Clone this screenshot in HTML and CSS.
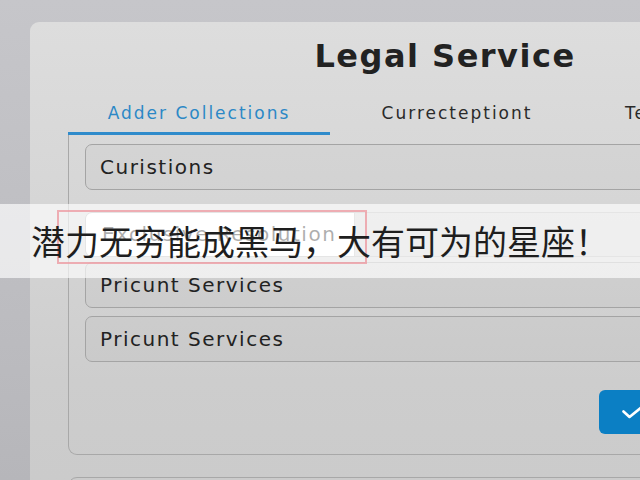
FILE: index.html
```html
<!DOCTYPE html>
<html lang="en">
<head>
<meta charset="utf-8">
<title>Legal Service</title>
<link rel="stylesheet" href="styles.css">
</head>
<body>
<div class="card">
  <h1 class="title">Legal Service</h1>
  <div class="tabs">
    <div class="tab tab-first active">Adder Collections</div>
    <div class="tab tab-second">Currecteptiont</div>
    <div class="tab tab-third">Terms of Service</div>
  </div>
  <div class="panel">
    <div class="field">Curistions</div>
    <div class="field field-focus"><span class="field-inner">Exclusive Resolution</span></div>
    <div class="field field-tight">Pricunt Services</div>
    <div class="field field-close">Pricunt Services</div>
    <div class="actions">
      <button class="confirm" type="button" aria-label="Confirm">
        <svg width="22" height="14" viewBox="0 0 22 14"><polyline points="1.5,6.5 7.5,12 20.5,1.5" fill="none" stroke="#ffffff" stroke-width="2.6" stroke-linecap="round" stroke-linejoin="round"/></svg>
      </button>
    </div>
  </div>
  <div class="next-box"></div>
</div>
<div class="banner">
  <div class="highlight"></div>
  <span class="banner-text">潜力无穷能成黑马，大有可为的星座！</span>
</div>
</body>
</html>
```

FILE: styles.css
```css
html, body {
  margin: 0;
  padding: 0;
  width: 640px;
  height: 480px;
  overflow: hidden;
}
body {
  background: linear-gradient(180deg, #c6c6ca 0%, #bdbdc1 60%, #b6b6ba 100%);
  font-family: "DejaVu Sans", "Liberation Sans", sans-serif;
  color: #222;
  position: relative;
}
.card {
  margin: 22px 0 0 30px;
  width: 830px;
  height: 600px;
  box-sizing: border-box;
  padding: 16px 0 0 38px;
  border-radius: 9px 9px 0 0;
  background: linear-gradient(180deg, #dddddd 0%, #d6d6d6 30%, #cdcdcd 60%, #c8c8c8 100%);
}
.title {
  margin: 0 0 28px -38px;
  font-family: "DejaVu Sans", "Liberation Sans", sans-serif;
  font-weight: bold;
  font-size: 32px;
  line-height: 37px;
  letter-spacing: 1.5px;
  text-align: center;
  color: #222;
}
.tabs {
  display: flex;
  white-space: nowrap;
}
.tab {
  font-size: 17px;
  line-height: 20px;
  letter-spacing: 2px;
  padding-bottom: 9px;
  border-bottom: 3px solid transparent;
  color: #2a2a2a;
  box-sizing: border-box;
}
.tab-first { width: 262px; text-align: center; }
.tab-second { width: 254px; text-align: center; }
.tab-third { padding-left: 41px; }
.tab.active {
  color: #2c88c6;
  border-bottom-color: #2f8bcb;
}
.panel {
  width: 616px;
  box-sizing: border-box;
  padding: 9px 16px 20px 16px;
  border-left: 1px solid #a8a8a8;
  border-bottom: 1px solid #a8a8a8;
  border-right: 1px solid #a8a8a8;
  border-radius: 0 0 9px 9px;
}
.field {
  height: 46px;
  box-sizing: border-box;
  border: 1px solid #a4a4a4;
  border-radius: 7px;
  background: rgba(0, 0, 0, 0.015);
  padding-left: 14px;
  font-size: 20px;
  line-height: 44px;
  letter-spacing: 1.5px;
  color: #222;
  white-space: nowrap;
}
.field-focus {
  margin-top: 22px;
  height: 45px;
  padding-left: 0;
  line-height: 43px;
  border-color: #b4b4b4;
}
.field-inner {
  display: block;
  width: 269px;
  height: 43px;
  box-sizing: border-box;
  background: #ffffff;
  border-right: 1px solid #bcbcbc;
  border-radius: 6px 0 0 6px;
  padding-left: 16px;
  color: #111;
}
.field-tight { margin-top: 5px; }
.field-close { margin-top: 8px; }
.actions {
  display: flex;
  justify-content: flex-end;
  margin-top: 28px;
}
.confirm {
  width: 68px;
  height: 44px;
  border: none;
  border-radius: 6px;
  background: #0b7fc4;
  display: flex;
  align-items: center;
  justify-content: center;
  padding: 0;
}
.next-box {
  margin-top: 22px;
  width: 616px;
  height: 60px;
  box-sizing: border-box;
  border: 1px solid #a8a8a8;
  border-radius: 9px 9px 0 0;
}
.banner {
  position: absolute;
  left: 0;
  top: 204px;
  width: 640px;
  height: 74px;
  background: rgba(255, 255, 255, 0.66);
  display: flex;
  align-items: center;
  box-sizing: border-box;
  padding-left: 31px;
}
.highlight {
  position: absolute;
  left: 57px;
  top: 6px;
  width: 310px;
  height: 54px;
  box-sizing: border-box;
  border: 2px solid rgba(236, 150, 158, 0.75);
}
.banner-text {
  position: relative;
  font-family: "Noto Sans CJK SC", "Noto Sans", sans-serif;
  font-size: 34px;
  line-height: 40px;
  color: #1e1e1e;
  white-space: nowrap;
}
```
